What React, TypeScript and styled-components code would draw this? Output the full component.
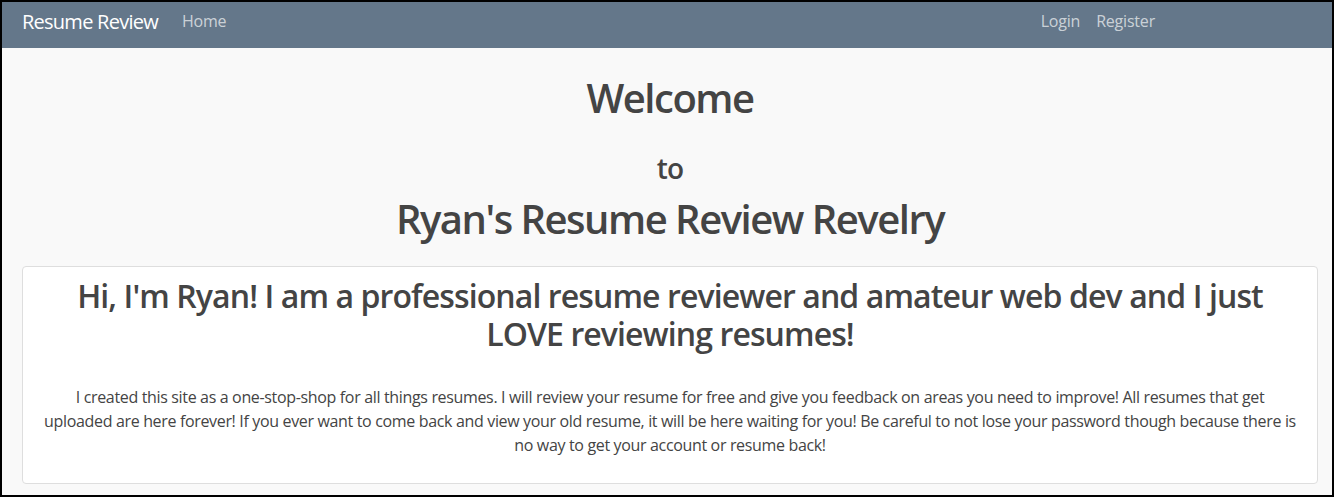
import React from "react";
import styled, { createGlobalStyle } from "styled-components";

const GlobalStyle = createGlobalStyle`
  *, *::before, *::after { box-sizing: border-box; }
  html, body { margin: 0; padding: 0; }
  body {
    font-family: "Open Sans", "Noto Sans", sans-serif;
    background: #000;
  }
`;

const Frame = styled.div`
  width: 1334px;
  height: 497px;
  border: 2px solid #000;
  background: #f9f9f9;
  overflow: hidden;
  display: flex;
  flex-direction: column;
`;

const NavBar = styled.nav`
  height: 46px;
  flex: none;
  background: #64778a;
  display: flex;
  align-items: center;
  padding: 0 169px 8px 20px;
`;

const Brand = styled.a`
  font-size: 20px;
  color: #fff;
  margin-right: 16px;
  letter-spacing: -0.75px;
  text-decoration: none;
`;

const NavLink = styled.a`
  font-size: 16px;
  color: rgba(255, 255, 255, 0.68);
  padding: 0 8px;
  letter-spacing: -0.2px;
  text-decoration: none;
`;

const Spacer = styled.div`
  flex: 1;
`;

const Main = styled.main`
  padding: 26px 14px 0 20px;
  color: #444;
  text-align: center;
`;

const Title = styled.h1<{ $bottom?: number }>`
  font-size: 40px;
  font-weight: 600;
  line-height: 1.2;
  letter-spacing: -1.5px;
  margin: 0 0 ${(p) => p.$bottom ?? 0}px;
`;

const Sub = styled.h3`
  font-size: 28px;
  font-weight: 600;
  line-height: 1.2;
  margin: 30px 0 9px;
  letter-spacing: -0.8px;
`;

const Card = styled.section`
  background: #fff;
  border: 1px solid #dedede;
  border-radius: 4px;
  padding: 10px 20px 26px;
`;

const CardHeading = styled.h2`
  font-size: 32px;
  font-weight: 600;
  line-height: 38px;
  letter-spacing: -0.9px;
  margin: 0 0 32px;
`;

const Text = styled.p`
  font-size: 16px;
  line-height: 24px;
  letter-spacing: -0.34px;
  margin: 0;
`;

export default function App() {
  return (
    <Frame>
      <GlobalStyle />
      <NavBar>
        <Brand href="#">Resume Review</Brand>
        <NavLink href="#">Home</NavLink>
        <Spacer />
        <NavLink href="#">Login</NavLink>
        <NavLink href="#">Register</NavLink>
      </NavBar>
      <Main>
        <Title>Welcome</Title>
        <Sub>to</Sub>
        <Title $bottom={23}>Ryan's Resume Review Revelry</Title>
        <Card>
          <CardHeading>
            Hi, I'm Ryan! I am a professional resume reviewer and amateur web dev and I just LOVE reviewing resumes!
          </CardHeading>
          <Text>
            I created this site as a one-stop-shop for all things resumes. I will review your resume for free and give
            you feedback on areas you need to improve! All resumes that get uploaded are here forever! If you ever want
            to come back and view your old resume, it will be here waiting for you! Be careful to not lose your
            password though because there is no way to get your account or resume back!
          </Text>
        </Card>
      </Main>
    </Frame>
  );
}
